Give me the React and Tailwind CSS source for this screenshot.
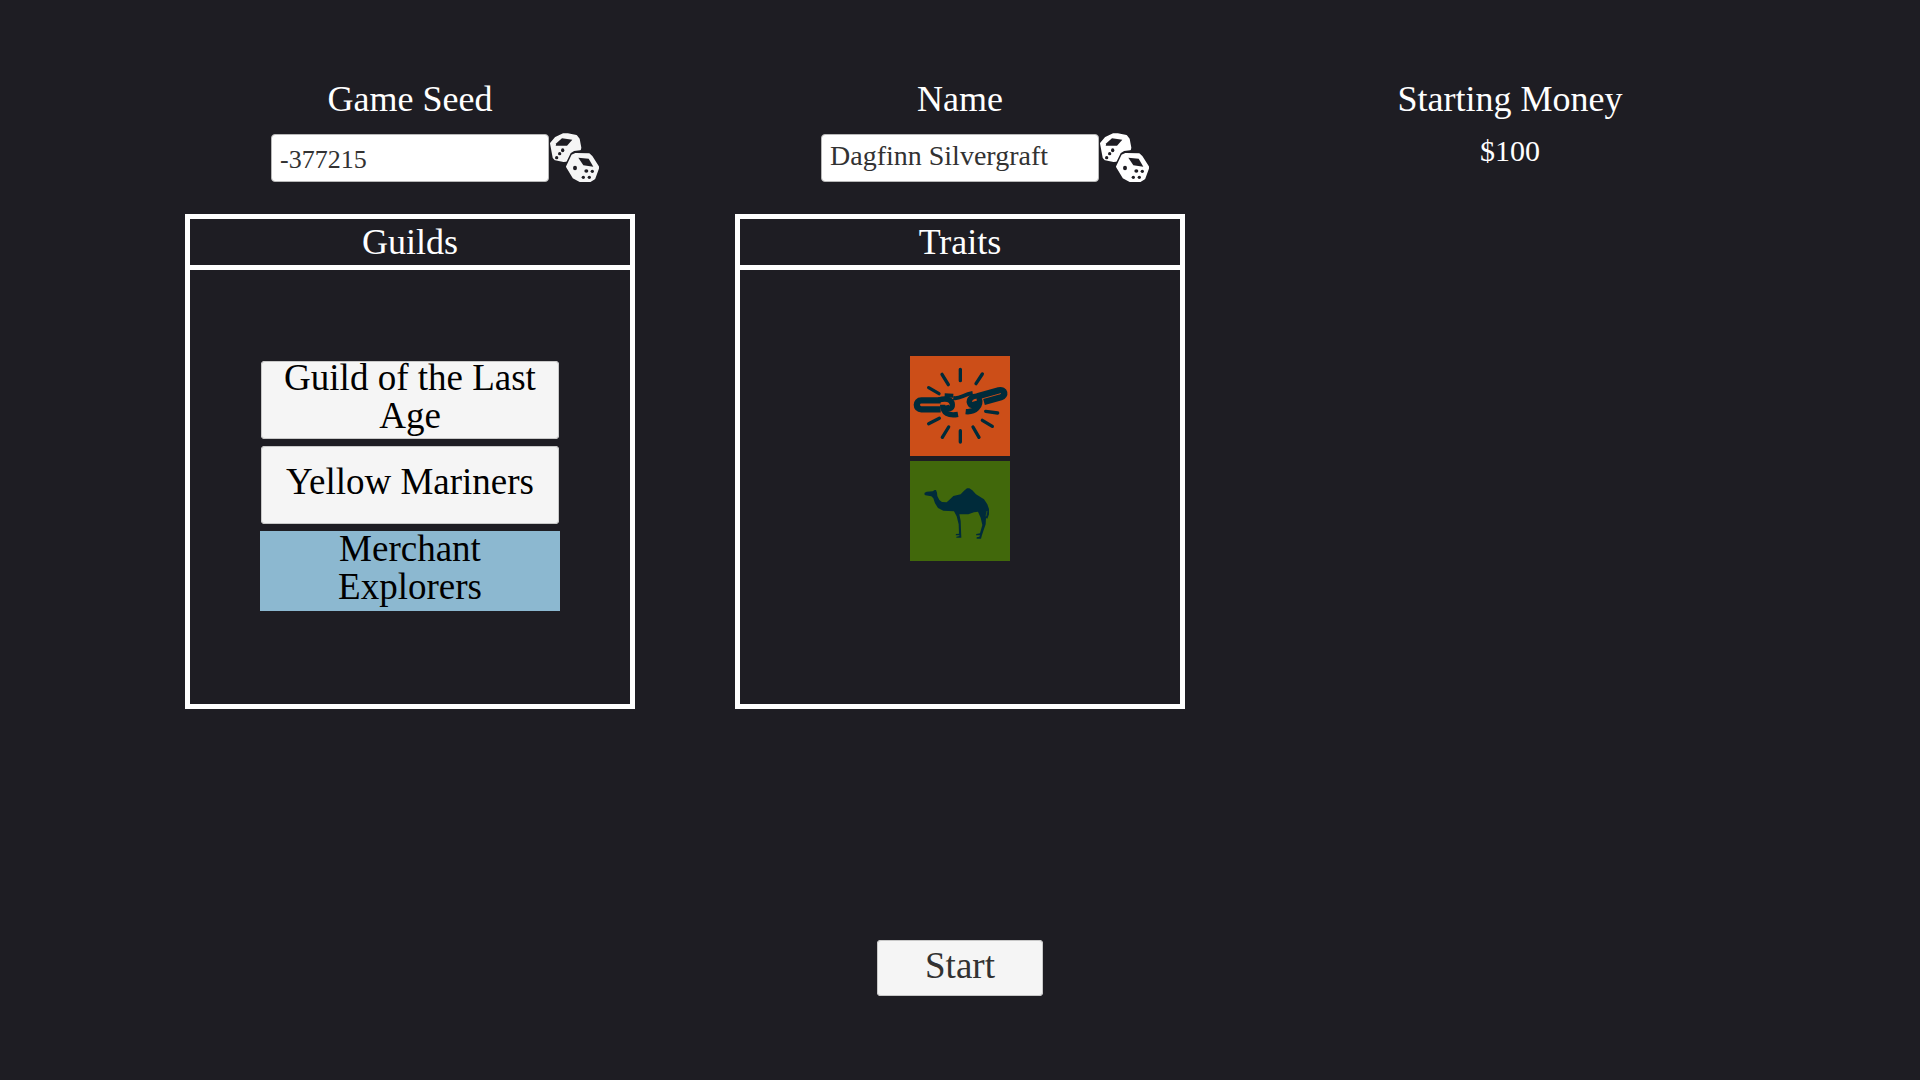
import { useState } from "react";

const guilds = ["Guild of the Last Age", "Yellow Mariners", "Merchant Explorers"];

function DiceIcon({ className }) {
  return (
    <svg viewBox="0 2 150 150" className={className} aria-hidden="true">
      <g fill="currentColor" stroke="currentColor" strokeWidth="6" strokeLinejoin="round">
        <path d="M6 33 L20 17 L42 6 L56 6 L82 11 L89 20 L94 46 L93 51 L75 53 L63 60 L51 85 L44 86 L19 81 L14 76 Z" />
        <path d="M54 103 L70 69 L80 65 L120 66 L128 73 L148 105 L136 138 L124 146 L92 146 L74 136 Z" />
      </g>
      <g fill="#1e1d23">
        <path d="M20 40 L22 33 L39 18 L70 22 L54 40 Z" />
        <ellipse cx="41" cy="54" rx="5" ry="6" />
        <ellipse cx="32" cy="64" rx="5" ry="5" />
        <ellipse cx="23" cy="76" rx="5" ry="5" />
        <path d="M88 76 L119 79 L133 103 L103 99 Z" />
        <ellipse cx="78" cy="107" rx="6" ry="7" />
        <ellipse cx="112" cy="116" rx="6" ry="5" />
        <ellipse cx="130" cy="117" rx="5" ry="5" />
        <ellipse cx="103" cy="135" rx="5" ry="5" />
        <ellipse cx="121" cy="135" rx="5" ry="5" />
      </g>
    </svg>
  );
}

function ChainIcon(props) {
  return (
    <svg viewBox="30 18 300 300" fill="none" stroke="currentColor" {...props}>
      <path
        strokeWidth="10"
        strokeLinecap="round"
        d="M181 58 V92 M126 73 L145 104 M247 72 L228 101 M86 113 L117 131 M86 221 L118 205 M146 231 L127 262 M181 242 V276 M219 231 L237 262 M247 211 L277 229 M257 184 L293 189"
      />
      <path strokeWidth="19" d="M122 151 H64 C46 151 46 178 64 178 H122" />
      <path strokeWidth="16" d="M116 150 C136 144 156 146 157 164 C158 178 142 180 139 166" />
      <path strokeWidth="16" d="M128 164 C128 190 146 198 174 193" />
      <path strokeWidth="12" d="M134 136 L160 137 M160 144 C180 148 188 134 218 129" />
      <path strokeWidth="19" d="M232 139 L296 121 C316 117 318 137 303 142 L252 156" />
      <path strokeWidth="16" d="M240 140 C220 134 204 146 209 160 C213 170 228 168 224 154" />
      <path strokeWidth="16" d="M237 144 C246 168 226 188 197 185" />
    </svg>
  );
}

function CamelIcon(props) {
  return (
    <svg viewBox="30 18 300 300" fill="currentColor" {...props}>
      <path d="M73 118 L74 113 L80 110 L98 109 L104 105 L108 105 L111 113 L112 123 L118 135 L126 141 L140 142 L150 133 L160 123 L182 118 L192 107 L201 100 L208 100 L217 106 L228 118 L252 133 L262 148 L267 162 L267 178 L262 191 L258 189 L257 208 L252 222 L246 240 L243 251 L230 251 L230 247 L238 245 L240 241 L228 241 L229 237 L240 235 L247 210 L242 188 L234 170 L222 172 L205 178 L178 178 L182 198 L183 225 L184 248 L169 248 L169 245 L178 243 L178 241 L167 241 L168 237 L177 236 L176 208 L170 184 L162 169 L130 167 L114 159 L105 145 L100 130 L94 124 L76 121 Z" />
      <path d="M261 168 L258 184" stroke="#41680b" strokeWidth="2" />
    </svg>
  );
}

const traits = [
  { name: "Broken chain", Icon: ChainIcon, tile: "bg-[#cc4e18]" },
  { name: "Camel", Icon: CamelIcon, tile: "bg-[#41680b]" },
];

function Field({ id, label, value, onChange, textClass, diceClass, onRoll }) {
  return (
    <div className="flex flex-col items-center">
      <label htmlFor={id} className="text-4xl leading-10">
        {label}
      </label>
      <div className="mt-3.5 grid w-full grid-cols-[1fr_278px_1fr] items-center">
        <input
          id={id}
          value={value}
          onChange={(e) => onChange(e.target.value)}
          className={`col-start-2 h-12 rounded border border-[#b8b8b8] bg-white px-2 text-[#323232] outline-none ${textClass}`}
        />
        <button type="button" aria-label={`Randomize ${label}`} onClick={onRoll} className={`w-[50px] ${diceClass}`}>
          <DiceIcon className="h-[50px] w-[50px]" />
        </button>
      </div>
    </div>
  );
}

function Panel({ title, children }) {
  return (
    <section className="flex min-h-[495px] flex-col border-5 border-white">
      <h2 className="border-b-5 border-white text-center text-4xl leading-[46px]">{title}</h2>
      {children}
    </section>
  );
}

export default function App() {
  const [seed, setSeed] = useState("-377215");
  const [name, setName] = useState("Dagfinn Silvergraft");
  const [selected, setSelected] = useState("Merchant Explorers");

  return (
    <main className="flex min-h-screen flex-col items-center bg-[#1e1d23] pt-[79px] pb-[84px] font-['Liberation_Serif',serif] text-white">
      <div className="grid w-full grid-cols-3 items-start gap-x-[100px] gap-y-[31px] px-[185px]">
        <Field
          id="seed"
          label="Game Seed"
          value={seed}
          onChange={setSeed}
          onRoll={() => setSeed(String(-Math.floor(Math.random() * 999999)))}
          textClass="pt-1 text-[26px]"
          diceClass="text-[#f5f5f5]"
        />
        <Field
          id="name"
          label="Name"
          value={name}
          onChange={setName}
          onRoll={() => setName("Dagfinn Silvergraft")}
          textClass="pb-1 text-[28px]"
          diceClass="text-white"
        />
        <div className="text-center">
          <h2 className="text-4xl leading-10">Starting Money</h2>
          <p className="mt-3.5 text-3xl leading-9">$100</p>
        </div>
        <Panel title="Guilds">
          <div className="flex flex-col items-center gap-[7px] pt-[91px]">
            {guilds.map((guild) => (
              <button
                key={guild}
                type="button"
                aria-pressed={guild === selected}
                onClick={() => setSelected(guild)}
                className={
                  guild === selected
                    ? "flex h-20 w-[300px] items-center justify-center bg-[#8cb8d0] px-5 pb-1.5 text-[37px] leading-[38px] text-black"
                    : "flex h-[78px] w-[298px] items-center justify-center rounded bg-[#f5f5f5] px-5 pb-1.5 text-[37px] leading-[38px] text-black inset-ring inset-ring-[#c8c8c8]"
                }
              >
                <span>{guild}</span>
              </button>
            ))}
          </div>
        </Panel>
        <Panel title="Traits">
          <ul className="flex flex-col items-center gap-[5px] pt-[86px]">
            {traits.map(({ name: trait, Icon, tile }) => (
              <li key={trait} className={`h-[100px] w-[100px] text-[#002b3a] ${tile}`}>
                <Icon role="img" aria-label={trait} className="h-full w-full" />
              </li>
            ))}
          </ul>
        </Panel>
      </div>
      <button
        type="button"
        className="mt-auto h-14 w-[166px] rounded bg-[#f5f5f5] pb-1 text-[37px] leading-[38px] text-[#323232] inset-ring inset-ring-[#c8c8c8]"
      >
        Start
      </button>
    </main>
  );
}
